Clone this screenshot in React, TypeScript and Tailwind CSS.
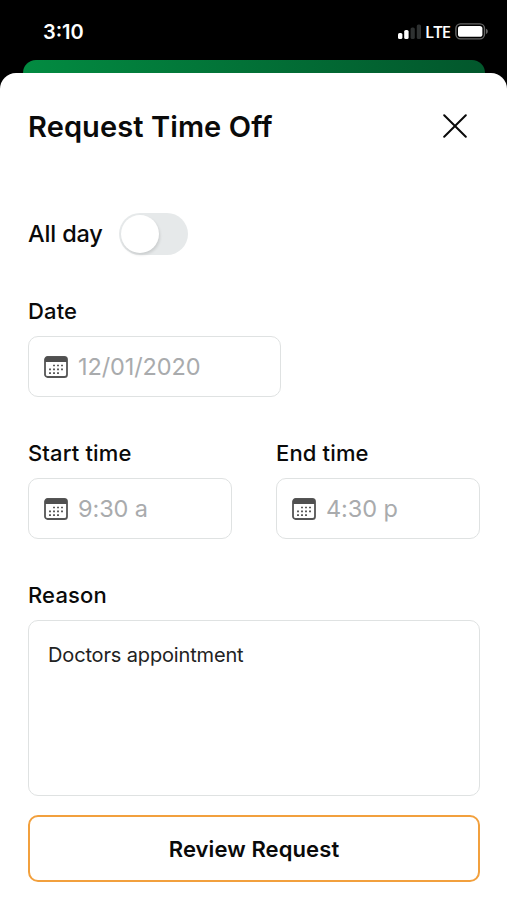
import { useState, type ReactNode } from "react";

const CalendarIcon = () => (
  <svg viewBox="0 0 24 22" className="h-[22px] w-6 shrink-0" fill="none">
    <rect x="1" y="1" width="22" height="20" rx="2.6" stroke="#555555" strokeWidth="1.8" />
    <path d="M1 6V3.6A2.6 2.6 0 0 1 3.6 1h16.8A2.6 2.6 0 0 1 23 3.6V6Z" fill="#505050" />
    <path
      d="M9 9.5h2M13 9.5h2M17 9.5h2M5 13.3h2M9 13.3h2M13 13.3h2M17 13.3h2M5 17.1h2M9 17.1h2M13 17.1h2"
      stroke="#5c5c5c"
      strokeWidth="1.7"
    />
  </svg>
);

const StatusBar = () => (
  <header className="flex h-[60px] items-center justify-between pt-1 pr-[18px] pb-[1px] pl-[43px] text-white">
    <span className="text-[20px] font-semibold">3:10</span>
    <div className="flex items-center">
      <svg viewBox="0 0 24 16" className="h-4 w-6">
        <rect x="0" y="9" width="4.4" height="6" rx="1.6" fill="#fff" />
        <rect x="6.2" y="6" width="4.4" height="9" rx="1.6" fill="#fff" />
        <rect x="12.6" y="3.5" width="4.2" height="11.5" rx="1.6" fill="#2e3131" />
        <rect x="18.8" y="0.5" width="4.2" height="14.5" rx="1.6" fill="#2e3131" />
      </svg>
      <span className="ml-[3px] w-[26px] pt-px font-['Open_Sans'] text-[16.5px] font-semibold tracking-[-0.8px]">LTE</span>
      <svg viewBox="0 0 34 17" className="ml-1 h-[17px] w-[34px]">
        <rect x="0.9" y="0.9" width="28.6" height="15" rx="4.6" fill="none" stroke="#666" strokeWidth="1.4" />
        <rect x="3" y="3" width="24.4" height="10.8" rx="2.6" fill="#fff" />
        <path d="M31 5.8c2.4.8 2.4 4.4 0 5.2Z" fill="#666" />
      </svg>
    </div>
  </header>
);

type FieldProps = {
  label: string;
  className?: string;
  children: ReactNode;
};

const Field = ({ label, className, children }: FieldProps) => (
  <div className={className}>
    <p className="h-[26px] text-[22px] leading-[26px] font-medium tracking-[0.15px]">{label}</p>
    {children}
  </div>
);

const PickerInput = ({ value }: { value: string }) => (
  <button
    type="button"
    className="mt-3 flex h-[61px] w-full items-center gap-[10px] rounded-[10px] border-[1.5px] border-[#dfe2e2] pl-[15px] text-left text-[23.5px] tracking-[-0.1px] text-[#a9abad]"
  >
    <CalendarIcon />
    <span>{value}</span>
  </button>
);

export default function App() {
  const [allDay, setAllDay] = useState(false);

  return (
    <div className="flex h-[900px] w-[507px] flex-col overflow-hidden bg-black font-['Inter',sans-serif] text-[#0a0a0a]">
      <StatusBar />
      <div className="mr-[22px] ml-[23px] h-[13px] rounded-t-[13px] bg-linear-to-r from-[#028b41] to-[#02572c]" />

      <main className="flex-1 rounded-t-[16px] bg-white pr-[27px] pl-7">
        <div className="flex h-[106px] items-center justify-between pr-[13px]">
          <h1 className="pt-0.5 text-[29px] font-semibold tracking-[0.1px]">Request Time Off</h1>
          <button type="button" aria-label="Close">
            <svg viewBox="0 0 24 24" className="size-6" stroke="#0a0a0a" strokeWidth="2" strokeLinecap="round">
              <path d="M1.2 1.2 22.8 22.8M22.8 1.2 1.2 22.8" />
            </svg>
          </button>
        </div>

        <div className="mt-[33px] flex h-[43px] items-center">
          <span className="w-[91px] pt-px text-[23.5px] font-medium tracking-[-0.15px]">All day</span>
          <button
            type="button"
            role="switch"
            aria-checked={allDay}
            aria-label="All day"
            onClick={() => setAllDay(!allDay)}
            className="flex h-[42px] w-[69px] items-center rounded-full bg-[#e6e9ea] px-[2px] aria-checked:justify-end"
          >
            <span className="size-[38px] rounded-full bg-white shadow-[1px_2px_3px_rgba(0,0,0,0.12)]" />
          </button>
        </div>

        <Field label="Date" className="mt-[43px] w-[253px]">
          <PickerInput value="12/01/2020" />
        </Field>

        <div className="mt-[43px] flex justify-between">
          <Field label="Start time" className="w-[204px]">
            <PickerInput value="9:30 a" />
          </Field>
          <Field label="End time" className="w-[204px]">
            <PickerInput value="4:30 p" />
          </Field>
        </div>

        <Field label="Reason" className="mt-[43px]">
          <div className="mt-3 h-[176px] rounded-[10px] border-[1.5px] border-[#dfe2e2] px-[19px] pt-[19px] text-[20px] tracking-[-0.15px] text-[#222]">
            Doctors appointment
          </div>
        </Field>

        <button
          type="button"
          className="mt-[19px] h-[67px] w-full rounded-[10px] border-2 border-[#f2a03d] pt-0.5 text-[22px] font-semibold tracking-[0.1px]"
        >
          Review Request
        </button>
      </main>
    </div>
  );
}
